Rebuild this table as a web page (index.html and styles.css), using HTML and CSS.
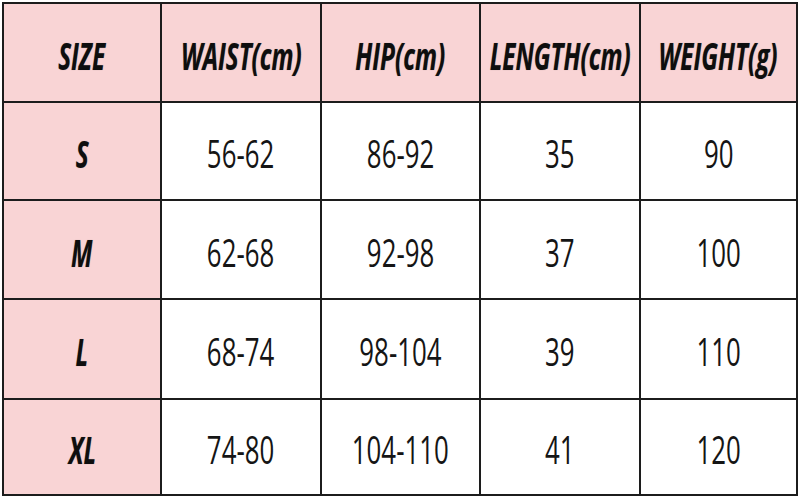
FILE: index.html
```html
<!DOCTYPE html>
<html>
<head>
<meta charset="utf-8">
<link rel="stylesheet" href="styles.css">
</head>
<body>
<div class="chart">
  <div class="cell head"><span class="t">SIZE</span></div>
  <div class="cell head"><span class="t">WAIST(cm)</span></div>
  <div class="cell head"><span class="t">HIP(cm)</span></div>
  <div class="cell head"><span class="t">LENGTH(cm)</span></div>
  <div class="cell head"><span class="t">WEIGHT(g)</span></div>

  <div class="cell size"><span class="t">S</span></div>
  <div class="cell"><span class="t">56-62</span></div>
  <div class="cell"><span class="t">86-92</span></div>
  <div class="cell"><span class="t">35</span></div>
  <div class="cell"><span class="t">90</span></div>

  <div class="cell size"><span class="t">M</span></div>
  <div class="cell"><span class="t">62-68</span></div>
  <div class="cell"><span class="t">92-98</span></div>
  <div class="cell"><span class="t">37</span></div>
  <div class="cell"><span class="t">100</span></div>

  <div class="cell size"><span class="t">L</span></div>
  <div class="cell"><span class="t">68-74</span></div>
  <div class="cell"><span class="t">98-104</span></div>
  <div class="cell"><span class="t">39</span></div>
  <div class="cell"><span class="t">110</span></div>

  <div class="cell size"><span class="t">XL</span></div>
  <div class="cell"><span class="t">74-80</span></div>
  <div class="cell"><span class="t">104-110</span></div>
  <div class="cell"><span class="t">41</span></div>
  <div class="cell"><span class="t">120</span></div>
</div>
</body>
</html>
```

FILE: styles.css
```css
html, body {
  margin: 0;
  padding: 0;
  background: #ffffff;
}

body {
  width: 800px;
  height: 500px;
  overflow: hidden;
}

.chart {
  margin: 2px 0 0 2px;
  width: 796px;
  box-sizing: border-box;
  display: grid;
  grid-template-columns: 156px 158px 157px 158px 155px;
  grid-template-rows: 97px 96px 97px 98px 94px;
  gap: 2px;
  padding: 2px;
  background: #1c1c1c;
}

.cell {
  background: #ffffff;
  display: flex;
  align-items: center;
  justify-content: center;
  padding-top: 4px;
  box-sizing: border-box;
  font-family: "Open Sans", "Noto Sans", sans-serif;
  font-size: 38px;
  color: #151515;
}

.t {
  display: inline-block;
  transform: scaleX(0.68);
  white-space: nowrap;
  line-height: 1;
}

.head,
.size {
  background: #f9d4d5;
  font-weight: 700;
  font-style: italic;
  color: #0e0e0e;
}

.head .t,
.size .t {
  transform: scaleX(0.64);
  text-shadow: 0 0 1px rgba(0,0,0,0.4);
}
```
